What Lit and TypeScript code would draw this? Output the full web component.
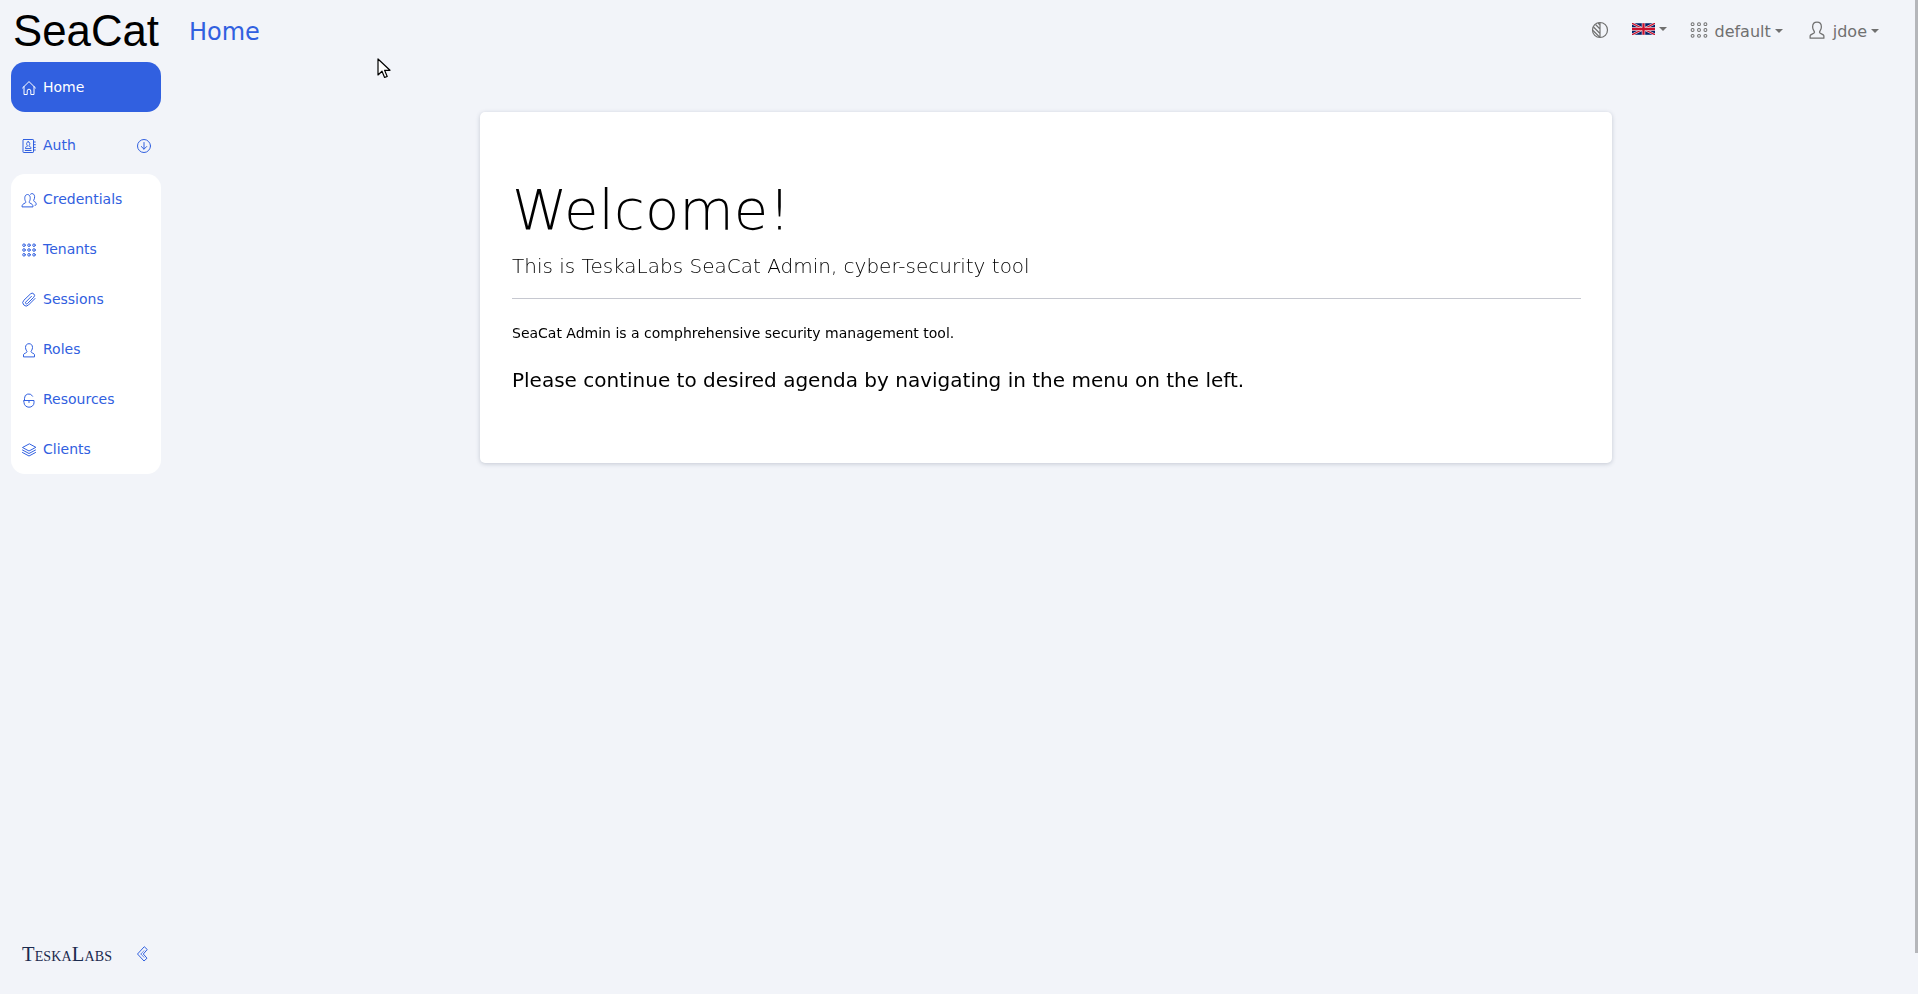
import { LitElement, html, css, svg } from "lit";
import { customElement } from "lit/decorators.js";

const ic = (body: unknown, size = 16) => html`<svg class="ic" width=${size} height=${size} viewBox="0 0 16 16" fill="none" stroke="currentColor" stroke-width="1" stroke-linecap="round" stroke-linejoin="round">${body}</svg>`;

const icons = {
  home: svg`<path d="M1.5 8 8 1.6 14.5 8"/><path d="M3 6.600V14.500h3.200V11a1.800 1.800 0 0 1 3.600 0v3.500H13V6.600"/>`,
  auth: svg`<rect x="2" y="1.500" width="10.500" height="13" rx=".6"/><path d="M12.500 4h1.800M12.500 6.700h1.800M12.500 9.400h1.800M12.500 12h1.800"/><path d="M7.200 3.800c-1 0-1.600.8-1.600 1.800 0 .9.400 1.500.7 1.900v.8c-.5.300-1.800.5-1.800 1.300v1h5.400v-1c0-.8-1.300-1-1.800-1.300v-.8c.3-.4.700-1 .7-1.900 0-1-.6-1.800-1.600-1.800z"/><path d="M4.200 12.500h6"/>`,
  credentials: svg`<path d="M1 14.500c0-2 1.300-2.700 3-3.400.8-.3 1-1 .6-1.700C3.800 8 3.700 6.800 3.800 5.500 4 3.500 5.200 2.500 6.500 2.500s2.500 1 2.700 3c.1 1.300 0 2.500-.8 3.900-.4.700-.2 1.400.6 1.700 1.700.7 3 1.400 3 3.400z"/><path d="M9.500 2.200c.4-.4.900-.6 1.500-.6 1.300 0 2.400 1 2.600 2.800.1 1.300-.1 2.400-.8 3.600-.3.600-.2 1.200.5 1.500 1.200.5 1.900 1.200 1.900 2.800 0 .8-.2 1-1.200 1"/>`,
  tenants: svg`${[3, 8, 13].flatMap((x) => [3.2, 8, 12.800].map((y) => svg`<circle cx=${x} cy=${y} r="1.300" stroke-width="1"/>`))}`,
  sessions: svg`<path d="M14 6.500 7.500 13a3.300 3.300 0 0 1-4.700-4.700L9.500 1.900a2.300 2.300 0 0 1 3.300 3.300L6.400 11.600a1.100 1.100 0 0 1-1.600-1.600L10.500 4.300"/>`,
  roles: svg`<path d="M2.500 14.500v-2c0-.9 3.500-1.600 3.500-2.800 0-.7-1.500-2-1.500-4.200C4.500 3 6 1.700 8 1.700S11.500 3 11.500 5.500c0 2.200-1.500 3.500-1.500 4.200 0 1.200 3.500 1.900 3.500 2.800v2z"/>`,
  resources: svg`<path d="M3 8.500h10v2.300a5 4.400 0 0 1-10 0z"/><path d="M3.500 8.500V6.300a4.300 4.300 0 0 1 8.100-2.100"/><path d="M8 8.500v2"/>`,
  clients: svg`<path d="M8 2 1.500 5.500 8 9l6.500-3.500z"/><path d="M1.500 8 8 11.500 14.500 8"/><path d="M1.500 10.500 8 14l6.500-3.500"/>`,
};

const navItems: [string, unknown][] = [
  ["Credentials", icons.credentials],
  ["Tenants", icons.tenants],
  ["Sessions", icons.sessions],
  ["Roles", icons.roles],
  ["Resources", icons.resources],
  ["Clients", icons.clients],
];

@customElement("app-root")
export class AppRoot extends LitElement {
  static styles = css`
    :host {
      display: block;
      width: 1918px;
      height: 994px;
      overflow: hidden;
      position: relative;
      background: #f2f4f9;
      font-family: "DejaVu Sans", sans-serif;
      color: #000;
    }
    .app {
      display: grid;
      grid-template-columns: 176px 1fr;
      height: 100%;
      padding-right: 2px;
      box-sizing: border-box;
    }
    .side {
      display: flex;
      flex-direction: column;
      padding: 0 15px 0 11px;
      box-sizing: border-box;
      height: 100%;
    }
    .brand {
      font-family: "Liberation Sans", sans-serif;
      font-size: 43.750px;
      line-height: 62px;
      height: 62px;
      text-align: center;
      white-space: nowrap;
    }
    .item {
      display: flex;
      align-items: center;
      height: 50px;
      padding: 0 10px;
      gap: 6px;
      color: #3160e0;
      font-size: 14px;
      box-sizing: border-box;
      border-radius: 14px;
    }
    .item .ic { flex: none; margin-top: 2px; }
    .item.active {
      background: #3160e0;
      color: #fff;
    }
    .item.parent {
      margin-top: 8px;
      margin-bottom: 4px;
      justify-content: flex-start;
    }
    .item .arrow { margin-left: auto; margin-right: -1px; display: flex; }
    .panel {
      background: #fff;
      border-radius: 14px;
    }
    .foot {
      margin-top: auto;
      display: flex;
      align-items: center;
      justify-content: space-between;
      padding: 0 11px 28px;
      height: 24px;
    }
    .logo {
      font-family: "Liberation Serif", serif;
      font-variant: small-caps;
      font-size: 20.500px;
      letter-spacing: 0.150px;
      color: #1b2a4e;
      line-height: 24px;
    }
    .collapse { color: #3160e0; display: flex; margin-right: -1px; }
    .main { display: flex; flex-direction: column; min-width: 0; }
    .top {
      display: flex;
      align-items: center;
      height: 62px;
      box-sizing: border-box;
      padding: 0 37px 0 13px;
    }
    .title { color: #3160e0; font-size: 24px; line-height: 62px; padding-top: 1px; }
    .tools {
      margin-left: auto;
      display: flex;
      align-items: center;
      color: #707070;
      font-size: 16px;
    }
    .tool { display: flex; align-items: center; }
    .caret {
      display: inline-block;
      width: 0;
      height: 0;
      border-left: 4px solid transparent;
      border-right: 4px solid transparent;
      border-top: 4px solid currentColor;
      margin-left: 4px;
    }
    .t-theme { margin-right: 23px; margin-bottom: 2px; }
    .t-lang { margin-right: 23px; margin-bottom: 4px; }
    .t-tenant { margin-right: 24px; }
    .t-tenant .ic { margin-right: 6px; margin-bottom: 2px; }
    .t-user .ic { margin-right: 6px; margin-bottom: 2px; }
    .body { padding-top: 50px; display: flex; justify-content: center; }
    .card {
      width: 1132px;
      height: 351px;
      box-sizing: border-box;
      background: #fff;
      border-radius: 5px;
      box-shadow: 0 1px 4px rgba(60, 70, 100, 0.25);
      padding: 64px 31px 0 32px;
      will-change: transform;
    }
    h1 {
      margin: 0;
      font-size: 56px;
      font-weight: 300;
      line-height: 67px;
    }
    .lead {
      margin: 8px 0 0;
      font-size: 20px;
      font-weight: 300;
      line-height: 30px;
      color: #000;
    }
    hr {
      margin: 17px 0 0;
      border: 0;
      border-top: 1px solid #c6c8d0;
    }
    .p1 {
      margin: 24px 0 0;
      font-size: 14px;
      line-height: 21px;
    }
    .p2 {
      margin: 21px 0 0;
      font-size: 20px;
      line-height: 30px;
    }
    .scroll {
      position: absolute;
      right: 0;
      top: 0;
      width: 3px;
      height: 953px;
      background: #b5b6ba;
    }
    .cursor { position: absolute; left: 377px; top: 58px; }
  `;

  render() {
    return html`
      <div class="app">
        <aside class="side">
          <div class="brand">SeaCat</div>
          <div class="item active">${ic(icons.home)}<span>Home</span></div>
          <div class="item parent">
            ${ic(icons.auth)}<span>Auth</span>
            <span class="arrow">${ic(svg`<circle cx="8" cy="8" r="6.500"/><path d="M8 4.500v6.500M5.300 8.500 8 11.200l2.700-2.700"/>`)}</span>
          </div>
          <div class="panel">
            ${navItems.map(([label, icon]) => html`<div class="item">${ic(icon)}<span>${label}</span></div>`)}
          </div>
          <div class="foot">
            <span class="logo">TeskaLabs</span>
            <span class="collapse">${ic(svg`<path d="M9 1 2.500 8 9 15l3-2.800L8.300 8 12 3.800z"/><path d="M6 8l3-3.300M6 8l3 3.300" stroke-width=".7"/>`)}</span>
          </div>
        </aside>
        <div class="main">
          <header class="top">
            <div class="title">Home</div>
            <div class="tools">
              <div class="tool t-theme">
                <svg width="18" height="18" viewBox="0 0 18 18" fill="none">
                  <circle cx="9" cy="9" r="7.500" stroke="#707070" stroke-width="1.200"/>
                  <path d="M9 1.500v15M4.500 3.500 9 8M2.500 6 9 12.500M2 9.500l6.500 6.500M7 2 9 4" stroke="#707070" stroke-width="1.200"/>
                </svg>
              </div>
              <div class="tool t-lang">
                <svg width="23" height="12" viewBox="0 0 60 30">
                  <rect width="60" height="30" fill="#012169"/>
                  <path d="M0 0 60 30M60 0 0 30" stroke="#fff" stroke-width="6"/>
                  <path d="M0 0 60 30M60 0 0 30" stroke="#c8102e" stroke-width="3.500"/>
                  <path d="M30 0v30M0 15h60" stroke="#fff" stroke-width="9"/>
                  <path d="M30 0v30M0 15h60" stroke="#c8102e" stroke-width="6"/>
                </svg>
                <span class="caret"></span>
              </div>
              <div class="tool t-tenant">
                ${ic(svg`${[2.300, 8, 13.700].flatMap((x) => [2.800, 8, 13.200].map((y) => svg`<circle cx=${x} cy=${y} r="1.300" stroke-width=".9"/>`))}`, 18)}
                <span>default</span><span class="caret"></span>
              </div>
              <div class="tool t-user">
                ${ic(icons.roles, 20)}
                <span>jdoe</span><span class="caret"></span>
              </div>
            </div>
          </header>
          <main class="body">
            <section class="card">
              <h1>Welcome!</h1>
              <p class="lead">This is TeskaLabs SeaCat Admin, cyber-security tool</p>
              <hr />
              <p class="p1">SeaCat Admin is a comphrehensive security management tool.</p>
              <p class="p2">Please continue to desired agenda by navigating in the menu on the left.</p>
            </section>
          </main>
        </div>
      </div>
      <div class="scroll"></div>
      <svg class="cursor" width="14" height="22" viewBox="0 0 14 22">
        <path d="M1 1v16l4-3.800 2.600 6.300 2.600-1.100-2.600-6.100H13z" fill="#fff" stroke="#000" stroke-width="1.200" stroke-linejoin="round"/>
      </svg>
    `;
  }
}
